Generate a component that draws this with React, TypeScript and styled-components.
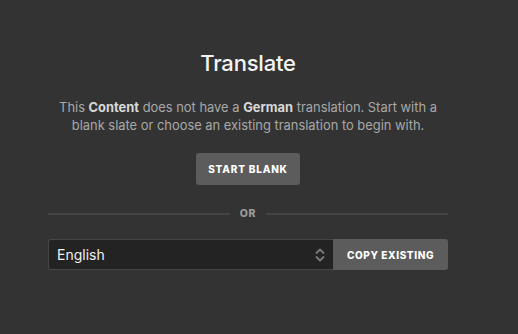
import React from 'react'
import styled, { createGlobalStyle } from 'styled-components'

const Global = createGlobalStyle`
  html, body {
    margin: 0;
    background: #333333;
  }
  body {
    font-family: Inter, "Noto Sans", "Liberation Sans", sans-serif;
    -webkit-font-smoothing: antialiased;
  }
`

const Page = styled.div`
  width: 518px;
  height: 334px;
  box-sizing: border-box;
  padding: 49px 70px 0 48px;
  background: #333333;
`

const Panel = styled.div`
  width: 400px;
  display: flex;
  flex-direction: column;
  align-items: center;
`

const Title = styled.h1`
  margin: 0;
  font-size: 22px;
  font-weight: 500;
  color: #f4f4f4;
  line-height: 28px;
  letter-spacing: -0.2px;
`

const Intro = styled.p`
  margin: 22px 0 0;
  width: 400px;
  text-align: center;
  font-size: 12.9px;
  line-height: 18px;
  color: #a8a8a8;

  strong {
    color: #d8d8d8;
    font-weight: 700;
  }
`

const Button = styled.button<{ $square?: boolean }>`
  border: none;
  background: #5c5c5c;
  color: #ffffff;
  font-family: inherit;
  font-size: 10px;
  font-weight: 800;
  letter-spacing: 0.8px;
  text-transform: uppercase;
  border-radius: ${p => (p.$square ? '0 3px 3px 0' : '3px')};
  cursor: pointer;
`

const StartButton = styled(Button)`
  margin-top: 18px;
  width: 104px;
  height: 32px;
`

const Divider = styled.div`
  width: 100%;
  margin-top: 22px;
  display: flex;
  align-items: center;
  gap: 10px;
  color: #9a9a9a;
  font-size: 10.5px;
  font-weight: 800;
  letter-spacing: 0.6px;

  &::before,
  &::after {
    content: '';
    flex: 1;
    height: 2px;
    background: #444444;
  }
`

const Row = styled.div`
  width: 100%;
  margin-top: 19px;
  display: flex;
  height: 31px;
`

const Select = styled.div`
  flex: 1;
  display: flex;
  align-items: center;
  justify-content: space-between;
  box-sizing: border-box;
  padding: 0 8px 0 8px;
  background: #232323;
  border: 1px solid #464646;
  border-right: none;
  border-radius: 3px 0 0 3px;
  color: #f0f0f0;
  font-size: 14px;
`

const CopyButton = styled(Button)`
  width: 115px;
  height: 31px;
  letter-spacing: 0.6px;
`

function UpDown() {
  return (
    <svg width="10" height="14" viewBox="0 0 10 14" fill="none" stroke="#7a7a7a" strokeWidth="1.8" strokeLinecap="round" strokeLinejoin="round">
      <path d="M1.5 5 L5 1.5 L8.5 5" />
      <path d="M1.5 9 L5 12.5 L8.5 9" />
    </svg>
  )
}

export default function App() {
  return (
    <>
      <Global />
      <Page>
        <Panel>
          <Title>Translate</Title>
          <Intro>
            This <strong>Content</strong> does not have a <strong>German</strong> translation. Start with a
            blank slate or choose an existing translation to begin with.
          </Intro>
          <StartButton>Start Blank</StartButton>
          <Divider>OR</Divider>
          <Row>
            <Select>
              English
              <UpDown />
            </Select>
            <CopyButton $square>Copy Existing</CopyButton>
          </Row>
        </Panel>
      </Page>
    </>
  )
}
